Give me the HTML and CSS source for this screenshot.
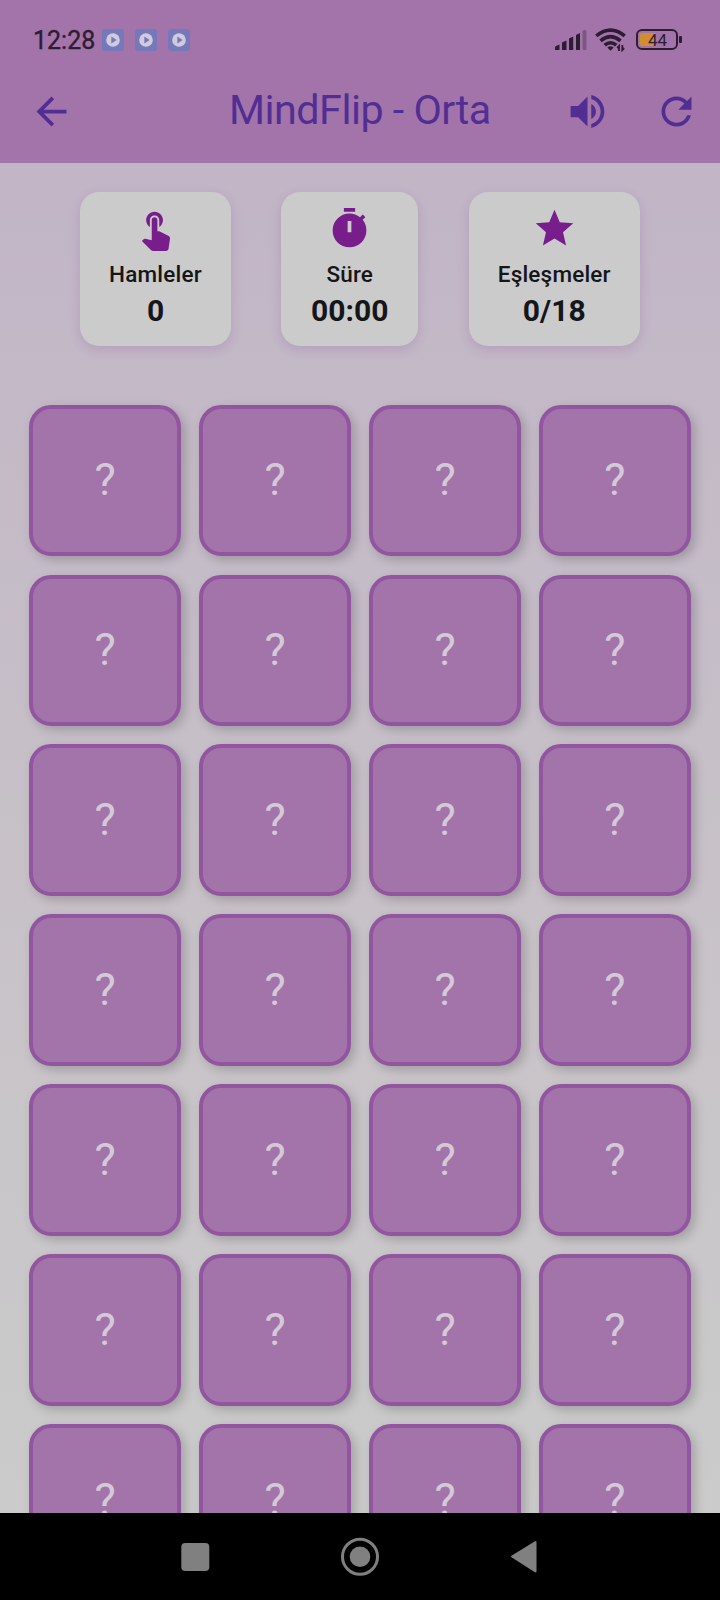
FILE: index.html
```html
<!DOCTYPE html>
<html lang="tr">
<head>
<meta charset="utf-8">
<title>MindFlip - Orta</title>
<link rel="stylesheet" href="styles.css">
</head>
<body>
<header class="top">
  <div class="status">
    <div class="status-left">
      <span class="clock">12:28</span>
      <div class="notices">
        <svg class="notice" viewBox="0 0 22 22"><rect width="22" height="22" rx="3" fill="#7678bc"/><circle cx="11" cy="11" r="6.8" fill="#d2cbdc"/><path d="M9.3 7.4v7.2l5.4-3.6z" fill="#7678bc"/></svg>
        <svg class="notice" viewBox="0 0 22 22"><rect width="22" height="22" rx="3" fill="#7678bc"/><circle cx="11" cy="11" r="6.8" fill="#d2cbdc"/><path d="M9.3 7.4v7.2l5.4-3.6z" fill="#7678bc"/></svg>
        <svg class="notice" viewBox="0 0 22 22"><rect width="22" height="22" rx="3" fill="#7678bc"/><circle cx="11" cy="11" r="6.8" fill="#d2cbdc"/><path d="M9.3 7.4v7.2l5.4-3.6z" fill="#7678bc"/></svg>
      </div>
    </div>
    <div class="status-right">
      <svg class="signal" viewBox="0 0 32 22" fill="#2d1c33"><path d="M0 20v-2.500q0-1 1-1.500l3.500-1.500V20zM7 20v-7.500l4.500-2V20zM14 20V8.500l4.200-1.900V20zM21 20V5l4-2V20z"/><rect x="27.500" y="0" width="4" height="20" rx="1.500" opacity=".32"/></svg>
      <svg class="wifi" viewBox="0 0 32 24" fill="none" stroke="#2d1c33" stroke-width="3.600"><path d="M1.300 7.800Q15.500-3.700 29.700 7.800M5.500 12.800Q15.500 4.500 25.500 12.800M9.700 17.200Q15.500 12.300 21.300 17.200"/><path d="M12.300 19.500q3.200-2.300 6.400 0L15.500 22.800z" fill="#2d1c33" stroke="none"/><path d="M24 23v-5l-1.800 2M27.300 17v5l1.800-2" stroke-width="1.900"/></svg>
      <div class="battery"><span class="battery-body">44</span><span class="battery-tip"></span></div>
    </div>
  </div>
  <div class="bar">
    <svg class="icon" viewBox="0 0 24 24"><path d="M20 11H7.830l5.590-5.590L12 4l-8 8 8 8 1.410-1.410L7.830 13H20v-2z"/></svg>
    <h1 class="title">MindFlip - Orta</h1>
    <div class="actions">
      <svg class="icon" viewBox="0 0 24 24"><path d="M3 9v6h4l5 5V4L7 9H3zm13.500 3c0-1.770-1.020-3.290-2.500-4.030v8.050c1.480-.730 2.500-2.250 2.500-4.020zM14 3.230v2.060c2.890.860 5 3.540 5 6.710s-2.110 5.850-5 6.710v2.060c4.010-.910 7-4.490 7-8.770s-2.990-7.860-7-8.770z"/></svg>
      <svg class="icon" viewBox="0 0 24 24"><path d="M17.650 6.350C16.200 4.900 14.210 4 12 4c-4.420 0-7.990 3.580-7.990 8s3.570 8 7.990 8c3.730 0 6.840-2.550 7.730-6h-2.080c-.820 2.330-3.040 4-5.650 4-3.310 0-6-2.690-6-6s2.690-6 6-6c1.660 0 3.140.690 4.220 1.780L13 11h7V4l-2.350 2.350z"/></svg>
    </div>
  </div>
</header>
<main class="game">
  <section class="stats">
    <div class="stat moves">
      <svg class="stat-icon" viewBox="0 0 24 24"><path d="M9 11.240V7.500C9 6.120 10.120 5 11.500 5S14 6.120 14 7.500v3.740c1.210-.810 2-2.180 2-3.740C16 5.010 13.990 3 11.500 3S7 5.010 7 7.500c0 1.560.790 2.930 2 3.740zm9.840 4.630l-4.540-2.260c-.170-.070-.350-.110-.540-.110H13v-6c0-.830-.670-1.500-1.500-1.500S10 6.670 10 7.500v10.740l-3.430-.720c-.080-.010-.150-.030-.240-.030-.310 0-.590.130-.790.330l-.790.800 4.940 4.940c.270.270.650.440 1.060.440h6.790c.750 0 1.330-.550 1.440-1.280l.750-5.270c.010-.070.020-.140.020-.200 0-.620-.380-1.160-.910-1.380z"/></svg>
      <span class="label">Hamleler</span><span class="value">0</span>
    </div>
    <div class="stat time">
      <svg class="stat-icon" viewBox="0 0 24 24"><path fill-rule="evenodd" d="M15 1H9v2h6V1zm-4 13h2V8h-2v6zm8.030-6.610l1.420-1.420c-.430-.510-.900-.990-1.410-1.410l-1.420 1.420C16.070 4.740 14.120 4 12 4c-4.970 0-9 4.030-9 9s4.020 9 9 9 9-4.030 9-9c0-2.120-.740-4.070-1.970-5.610z"/></svg>
      <span class="label">Süre</span><span class="value">00:00</span>
    </div>
    <div class="stat matches">
      <svg class="stat-icon" viewBox="0 0 24 24"><path d="M12 17.270L18.180 21l-1.640-7.030L22 9.240l-7.190-.610L12 2 9.190 8.630 2 9.240l5.460 4.730L5.820 21z"/></svg>
      <span class="label">Eşleşmeler</span><span class="value">0/18</span>
    </div>
  </section>
  <section class="board">
    <div class="tile">?</div><div class="tile">?</div><div class="tile">?</div><div class="tile">?</div>
    <div class="tile">?</div><div class="tile">?</div><div class="tile">?</div><div class="tile">?</div>
    <div class="tile">?</div><div class="tile">?</div><div class="tile">?</div><div class="tile">?</div>
    <div class="tile">?</div><div class="tile">?</div><div class="tile">?</div><div class="tile">?</div>
    <div class="tile">?</div><div class="tile">?</div><div class="tile">?</div><div class="tile">?</div>
    <div class="tile">?</div><div class="tile">?</div><div class="tile">?</div><div class="tile">?</div>
    <div class="tile">?</div><div class="tile">?</div><div class="tile">?</div><div class="tile">?</div>
  </section>
</main>
<nav class="nav">
  <svg viewBox="0 0 720 87" fill="#808080"><rect x="181.300" y="30" width="28" height="28" rx="4"/><circle cx="360" cy="43.700" r="17.500" fill="none" stroke="#808080" stroke-width="3"/><circle cx="360" cy="43.700" r="10.300"/><path d="M512 43.500L535.500 29v29.500z" stroke="#808080" stroke-width="2" stroke-linejoin="round"/></svg>
</nav>
</body>
</html>
```
FILE: styles.css
```css
* { box-sizing: border-box; }

body {
  margin: 0;
  height: 1600px;
  display: flex;
  flex-direction: column;
  overflow: hidden;
  font-family: Roboto, "Liberation Sans", sans-serif;
  background: #000;
}

svg { display: block; flex: none; }

.top {
  flex: none;
  height: 163px;
  background: #a374aa;
}

.status {
  height: 60px;
  padding: 20px 38px 0 33px;
  display: flex;
  justify-content: space-between;
}

.status-left { display: flex; }

.clock {
  width: 68.5px;
  font-size: 25px;
  line-height: 41px;
  -webkit-text-stroke: .35px #2d1c33;
  color: #2d1c33;
}

.notices {
  display: flex;
  gap: 11.3px;
  padding-top: 8.5px;
}

.notice { width: 22px; height: 22px; }

.status-right { display: flex; padding-top: 8px; }

.signal { width: 32px; height: 22px; margin: 2px 8px 0 0; }

.wifi { width: 32px; height: 24px; margin-right: 9px; }

.battery { display: flex; align-items: center; gap: 1.5px; height: 22px; }

.battery-body {
  width: 42px;
  height: 21px;
  border: 2px solid #2d1c33;
  border-radius: 6px;
  background: linear-gradient(90deg, #d08e2f 15px, transparent 15px) 0 0 no-repeat content-box;
  padding: 2px 0 2px 2px;
  font-size: 17px;
  line-height: 14px;
  text-align: center;
  color: #2d1c33;
}

.battery-tip { width: 3px; height: 7px; border-radius: 1px; background: #2d1c33; }

.bar {
  height: 102px;
  padding: 0 21.5px 0 29px;
  display: grid;
  grid-template-columns: 200px 1fr auto;
  align-items: center;
}

.icon { width: 45px; height: 45px; fill: #522e93; }

.title {
  margin: 0 0 3px;
  font-size: 41.25px;
  line-height: 52px;
  font-weight: 400;
  letter-spacing: -.5px;
  color: #522e93;
  white-space: nowrap;
}

.actions { display: flex; gap: 43.5px; }

.game {
  flex: 1;
  min-height: 0;
  overflow: hidden;
  background: linear-gradient(180deg, #c1b5c6, #c8c3c8 60%, #cacbca);
}

.stats {
  height: 241.6px;
  padding: 29px 80px 0;
  display: flex;
  justify-content: space-between;
}

.stat {
  height: 154px;
  padding-top: 14.4px;
  display: flex;
  flex-direction: column;
  align-items: center;
  border-radius: 19px;
  background: #cbcbcb;
  box-shadow: 0 4px 12px rgba(120, 29, 140, .16);
}

.moves { width: 151px; }
.time { width: 137px; }
.matches { width: 171.5px; }

.stat-icon { width: 45px; height: 45px; margin-bottom: 7.6px; fill: #781d8c; }

.label {
  font-size: 22.5px;
  line-height: 30px;
  font-weight: 500;
  letter-spacing: .2px;
  color: #141618;
}

.value {
  font-size: 30px;
  line-height: 43px;
  font-weight: 700;
  color: #141618;
}

.board {
  padding: 0 29px 0 29.4px;
  display: grid;
  grid-template-columns: repeat(4, 151.6px);
  grid-auto-rows: 151.6px;
  gap: 18.35px;
}

.tile {
  display: grid;
  place-items: center;
  border: 4px solid #92559f;
  border-radius: 22px;
  background: #a374aa;
  box-shadow: 4px 4px 11px rgba(0, 0, 0, .2);
  font-size: 45px;
  line-height: 54px;
  color: #d4c9d8;
}

.nav { flex: none; height: 87px; background: #000; }
```
